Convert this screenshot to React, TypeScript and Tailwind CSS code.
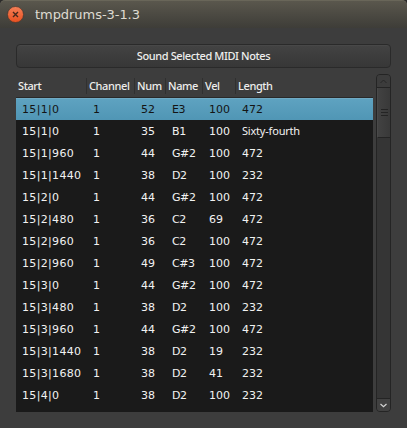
const notes = [
  ['15|1|0', '1', '52', 'E3', '100', '472'],
  ['15|1|0', '1', '35', 'B1', '100', 'Sixty-fourth'],
  ['15|1|960', '1', '44', 'G#2', '100', '472'],
  ['15|1|1440', '1', '38', 'D2', '100', '232'],
  ['15|2|0', '1', '44', 'G#2', '100', '472'],
  ['15|2|480', '1', '36', 'C2', '69', '472'],
  ['15|2|960', '1', '36', 'C2', '100', '472'],
  ['15|2|960', '1', '49', 'C#3', '100', '472'],
  ['15|3|0', '1', '44', 'G#2', '100', '472'],
  ['15|3|480', '1', '38', 'D2', '100', '232'],
  ['15|3|960', '1', '44', 'G#2', '100', '472'],
  ['15|3|1440', '1', '38', 'D2', '19', '232'],
  ['15|3|1680', '1', '38', 'D2', '41', '232'],
  ['15|4|0', '1', '38', 'D2', '100', '232'],
];

const columns = ['Start', 'Channel', 'Num', 'Name', 'Vel', 'Length'];
const grid = 'grid grid-cols-[71px_48px_31px_37px_33px_137px]';

function cellStyle(value: string, column: number) {
  if (value === 'Sixty-fourth') return "font-['Noto_Sans',sans-serif] tracking-[-0.2px] leading-[22px]";
  if (column === 0) return 'tracking-[0.33px]';
  if (column === 3) return 'tracking-[-0.4px]';
  return '';
}

function TitleBar() {
  return (
    <header className="flex h-[28px] shrink-0 items-center rounded-t-[5px] border-t border-[#696659] bg-linear-to-b from-[#5a574d] to-[#3e3d38] pl-[7px]">
      <svg width="17" height="17" viewBox="0 0 17 17" className="shrink-0">
        <defs>
          <linearGradient id="close" x1="0" y1="0" x2="0" y2="1">
            <stop offset="0" stopColor="#f58058" />
            <stop offset="1" stopColor="#e8501f" />
          </linearGradient>
        </defs>
        <circle cx="8.5" cy="8.5" r="8" fill="url(#close)" stroke="#45352d" strokeWidth="0.7" />
        <path d="M6 6l5 5M11 6l-5 5" stroke="#45281c" strokeWidth="1.4" />
      </svg>
      <h1 className="ml-[11px] font-['DejaVu_Sans',sans-serif] text-[13px] leading-none tracking-[-0.05px] whitespace-nowrap text-[#dfdbd2]">
        tmpdrums-3-1.3
      </h1>
    </header>
  );
}

function NoteTable() {
  return (
    <div className="flex w-[357px] flex-col">
      <div className={`${grid} h-[24px] border-b border-[#292929] pt-[4px] font-['Noto_Sans',sans-serif] text-[11px] font-medium tracking-[-0.4px] text-[#eeeeec]`}>
        {columns.map((name, i) => (
          <div key={name} className={`h-[16px] pl-[2px] leading-[16px] whitespace-nowrap ${i < 5 ? 'border-r border-[#303030]' : ''}`}>
            {name}
          </div>
        ))}
      </div>
      <div className="flex-1 bg-[#1a1a1a]">
        {notes.map((note, r) => (
          <div
            key={r}
            className={`${grid} h-[22px] font-['DejaVu_Sans',sans-serif] text-[11px] ${r === 0 ? 'border-t border-[#70aac4] bg-linear-to-b from-[#5ea2c0] to-[#5096b5] leading-[21px] text-[#141414]' : 'leading-[24px] text-[#f2f2f2]'}`}
          >
            {note.map((value, c) => (
              <div key={c} className={`pl-[6px] whitespace-nowrap ${cellStyle(value, c)}`}>
                {value}
              </div>
            ))}
          </div>
        ))}
      </div>
    </div>
  );
}

function ScrollBar() {
  return (
    <div className="flex w-[15px] flex-col overflow-hidden rounded-[4px] border border-[#242424] bg-[#353535]">
      <div className="flex h-[13px] items-center justify-center border-b border-[#242424] bg-[#3c3c3c]">
        <svg width="7" height="5" viewBox="0 0 7 5">
          <path d="M.5 4L3.5 1l3 3" fill="none" stroke="#272727" />
        </svg>
      </div>
      <div className="flex h-[50px] flex-col items-center justify-center gap-[2px] border-b border-l border-b-[#242424] border-l-[#494949] bg-linear-to-r from-[#424242] to-[#393939]">
        <div className="h-px w-[7px] bg-[#242424]" />
        <div className="h-px w-[7px] bg-[#242424]" />
        <div className="h-px w-[7px] bg-[#242424]" />
      </div>
      <div className="flex-1" />
      <div className="flex h-[13px] items-center justify-center border-t border-[#242424] bg-[#414141]">
        <svg width="7" height="5" viewBox="0 0 7 5">
          <path d="M.5 1L3.5 3.8l3-2.8" fill="none" stroke="#d4d4d4" strokeWidth="1.2" />
        </svg>
      </div>
    </div>
  );
}

export default function App() {
  return (
    <div className="h-[428px] w-[407px] overflow-hidden bg-[#2c2b2a]">
      <div className="flex h-full flex-col rounded-t-[5px] bg-[#3d3d3d]">
        <TitleBar />
        <main className="flex flex-1 flex-col px-[16px] pt-[16px] pb-[16px]">
          <button className="h-[24px] w-[375px] rounded-[4px] border border-[#2a2a2a] bg-linear-to-b from-[#434343] to-[#373737] font-['Noto_Sans',sans-serif] text-[11px] leading-[22px] font-medium tracking-[-0.4px] text-[#eeeeec] shadow-[inset_0_1px_0_#484848]">
            Sound Selected MIDI Notes
          </button>
          <div className="mt-[6px] flex flex-1 gap-[3px]">
            <NoteTable />
            <ScrollBar />
          </div>
        </main>
      </div>
    </div>
  );
}
